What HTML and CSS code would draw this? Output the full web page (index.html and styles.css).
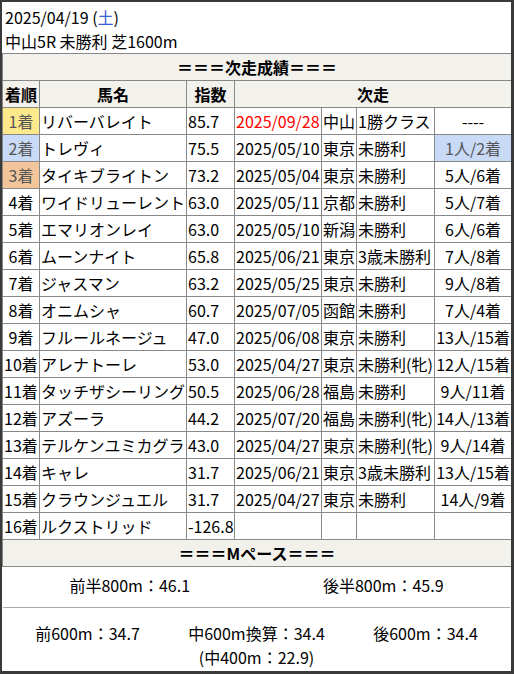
FILE: index.html
```html
<!DOCTYPE html>
<html lang="ja">
<head>
<meta charset="utf-8">
<link rel="stylesheet" href="styles.css">
</head>
<body>
<div class="card">
  <div class="title">
    <div>2025/04/19 (<span class="sat">土</span>)</div>
    <div>中山5R 未勝利 芝1600m</div>
  </div>
  <table class="res">
    <colgroup>
      <col class="c1"><col class="c2"><col class="c3"><col class="c4"><col class="c5"><col class="c6"><col class="c7">
    </colgroup>
    <tr><th colspan="7" class="sec">＝＝＝次走成績＝＝＝</th></tr>
    <tr class="head"><th>着順</th><th>馬名</th><th>指数</th><th colspan="4">次走</th></tr>
    <tr><td class="pos p1">1着</td><td>リバーバレイト</td><td>85.7</td><td class="red">2025/09/28</td><td>中山</td><td>1勝クラス</td><td class="r">----</td></tr>
    <tr><td class="pos p2">2着</td><td>トレヴィ</td><td>75.5</td><td>2025/05/10</td><td>東京</td><td>未勝利</td><td class="r p2">1人/2着</td></tr>
    <tr><td class="pos p3">3着</td><td>タイキブライトン</td><td>73.2</td><td>2025/05/04</td><td>東京</td><td>未勝利</td><td class="r">5人/6着</td></tr>
    <tr><td class="pos">4着</td><td>ワイドリューレント</td><td>63.0</td><td>2025/05/11</td><td>京都</td><td>未勝利</td><td class="r">5人/7着</td></tr>
    <tr><td class="pos">5着</td><td>エマリオンレイ</td><td>63.0</td><td>2025/05/10</td><td>新潟</td><td>未勝利</td><td class="r">6人/6着</td></tr>
    <tr><td class="pos">6着</td><td>ムーンナイト</td><td>65.8</td><td>2025/06/21</td><td>東京</td><td>3歳未勝利</td><td class="r">7人/8着</td></tr>
    <tr><td class="pos">7着</td><td>ジャスマン</td><td>63.2</td><td>2025/05/25</td><td>東京</td><td>未勝利</td><td class="r">9人/8着</td></tr>
    <tr><td class="pos">8着</td><td>オニムシャ</td><td>60.7</td><td>2025/07/05</td><td>函館</td><td>未勝利</td><td class="r">7人/4着</td></tr>
    <tr><td class="pos">9着</td><td>フルールネージュ</td><td>47.0</td><td>2025/06/08</td><td>東京</td><td>未勝利</td><td class="r">13人/15着</td></tr>
    <tr><td class="pos">10着</td><td>アレナトーレ</td><td>53.0</td><td>2025/04/27</td><td>東京</td><td>未勝利(牝)</td><td class="r">12人/15着</td></tr>
    <tr><td class="pos">11着</td><td>タッチザシーリング</td><td>50.5</td><td>2025/06/28</td><td>福島</td><td>未勝利</td><td class="r">9人/11着</td></tr>
    <tr><td class="pos">12着</td><td>アズーラ</td><td>44.2</td><td>2025/07/20</td><td>福島</td><td>未勝利(牝)</td><td class="r">14人/13着</td></tr>
    <tr><td class="pos">13着</td><td>テルケンユミカグラ</td><td>43.0</td><td>2025/04/27</td><td>東京</td><td>未勝利(牝)</td><td class="r">9人/14着</td></tr>
    <tr><td class="pos">14着</td><td>キャレ</td><td>31.7</td><td>2025/06/21</td><td>東京</td><td>3歳未勝利</td><td class="r">13人/15着</td></tr>
    <tr><td class="pos">15着</td><td>クラウンジュエル</td><td>31.7</td><td>2025/04/27</td><td>東京</td><td>未勝利</td><td class="r">14人/9着</td></tr>
    <tr><td class="pos">16着</td><td>ルクストリッド</td><td>-126.8</td><td></td><td></td><td></td><td></td></tr>
    <tr><th colspan="7" class="sec">＝＝＝Mペース＝＝＝</th></tr>
  </table>
  <div class="pace">
    <div class="row2">
      <div>前半800m：46.1</div>
      <div>後半800m：45.9</div>
    </div>
    <div class="rule"></div>
    <div class="row3">
      <div>前600m：34.7</div>
      <div>中600m換算：34.4<br>(中400m：22.9)</div>
      <div>後600m：34.4</div>
    </div>
  </div>
</div>
</body>
</html>
```

FILE: styles.css
```css
html, body {
  margin: 0;
  padding: 0;
}
body {
  background: #3a3a3a;
  font-family: "Noto Sans CJK JP", "Noto Sans", sans-serif;
  font-size: 16px;
  color: #000;
}
.card {
  margin: 2px 3px 3px 2px;
  width: 509px;
  height: 669px;
  background: #fff;
  overflow: hidden;
}
.title {
  padding: 3px 3px 0 3px;
  line-height: 24px;
  height: 48px;
}
.sat {
  color: #3c62d8;
}
.res {
  width: 509px;
  border-collapse: collapse;
  table-layout: fixed;
}
.c1 { width: 37px; }
.c2 { width: 147px; }
.c3 { width: 48px; }
.c4 { width: 87px; }
.c5 { width: 35px; }
.c6 { width: 78px; }
.c7 { width: 77px; }
.res td, .res th {
  border: 1px solid #888;
  padding: 1px 1px;
  line-height: 24px;
  height: 24px;
  white-space: nowrap;
  overflow: visible;
  text-align: left;
}
.res th {
  background: #f2f1ec;
  font-weight: bold;
  text-align: center;
}
.res .pos {
  text-align: center;
}
.res .r {
  text-align: center;
}
.p1 { background: #fde88b; color: #555; }
.p2 { background: #c9daf7; color: #555; }
.p3 { background: #f2c59a; color: #555; }
.red { color: #f00; }
.pace {
  padding: 6px 1px 0 1px;
}
.row2 {
  display: grid;
  grid-template-columns: 1fr 1fr;
  line-height: 24px;
  text-align: center;
}
.rule {
  height: 1px;
  background: #aaa;
  margin: 10px 0 13px 0;
}
.row3 {
  display: grid;
  grid-template-columns: 1fr 1fr 1fr;
  line-height: 24px;
  text-align: center;
}
```
